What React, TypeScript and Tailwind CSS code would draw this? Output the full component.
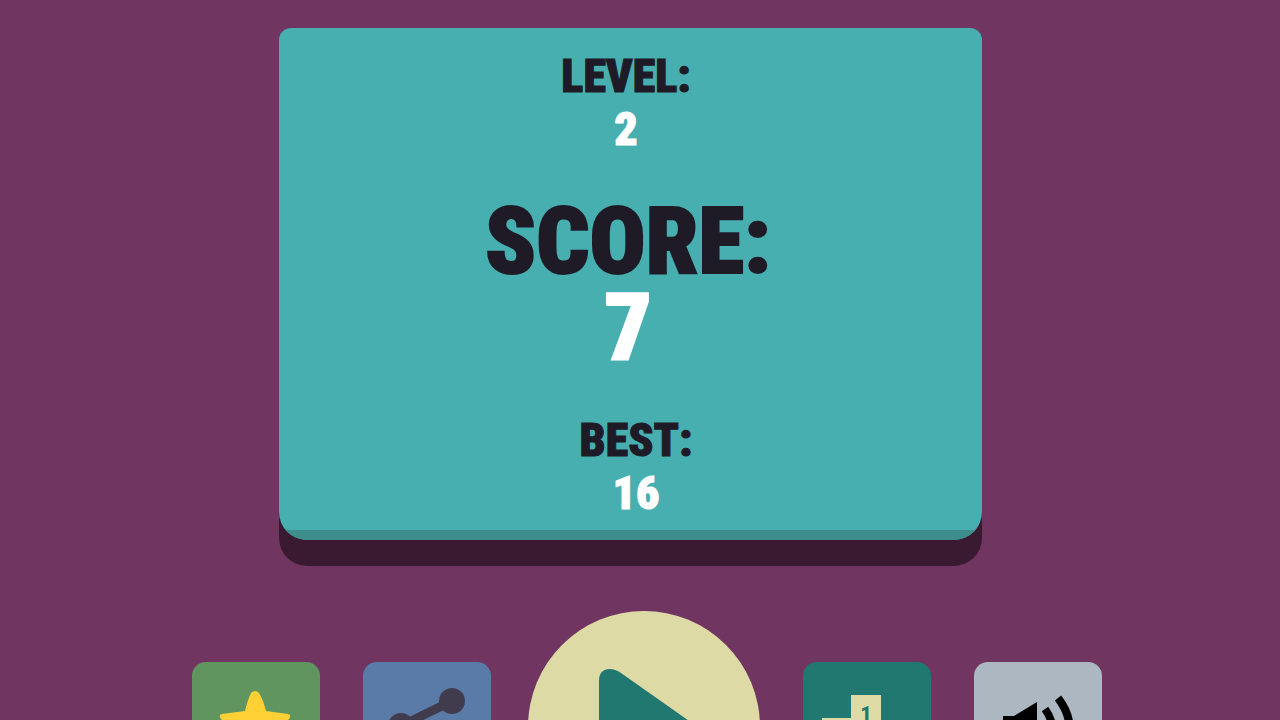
import type { ReactNode } from "react";

function Stat({ label, value, large = false, className = "" }: { label: string; value: number; large?: boolean; className?: string }) {
  const size = large
    ? "text-[93px] leading-[86px] [-webkit-text-stroke:2px_currentColor]"
    : "text-[46px] leading-[53px] [-webkit-text-stroke:1px_currentColor]";
  return (
    <dl className={`text-center ${size} ${className}`}>
      <dt className="text-[#1e1b27]">{label}</dt>
      <dd className="text-white">{value}</dd>
    </dl>
  );
}

function Tile({ label, className, children }: { label: string; className: string; children: ReactNode }) {
  return (
    <button type="button" aria-label={label} className={`mt-[51px] size-32 shrink-0 rounded-[14px] ${className}`}>
      <svg viewBox="0 0 128 128" className="size-full" aria-hidden="true">
        {children}
      </svg>
    </button>
  );
}

export default function App() {
  return (
    <main className="flex h-screen flex-col items-center overflow-hidden bg-[#703561] pt-7 font-['Roboto_Condensed','Roboto',sans-serif] font-black">
      <div className="flex w-full shrink-0 justify-center pr-5">
        <section className="w-full max-w-[703px] overflow-hidden rounded-t-xl rounded-b-[28px] bg-[#48afb1] shadow-[0_26px_0_#3a1a30]">
          <div className="flex flex-col items-center gap-[43px] pt-[22px] pb-[10px]">
            <Stat label="LEVEL:" value={2} className="pr-2" />
            <Stat label="SCORE:" value={7} large className="pr-1" />
            <Stat label="BEST:" value={16} className="pl-3" />
          </div>
          <div className="h-[10px] bg-[#3c8d8b]" />
        </section>
      </div>

      <nav className="mt-[71px] flex shrink-0 items-start justify-center gap-[43px] pl-[14px]">
        <Tile label="Rate" className="bg-[#61955f]">
          <path
            d="M59 31Q63 27 67 31Q71 37 74 49L96 52Q100 53 97 57L81 72L87 92Q88 99 81 96L63 84L45 96Q38 99 39 92L45 72L29 57Q26 53 30 52L53 49Q56 37 59 31Z"
            fill="#ffd033"
          />
        </Tile>
        <Tile label="Share" className="bg-[#5a7ba7]">
          <path d="M89 89L38 64L89 39" fill="none" stroke="#403c4e" strokeWidth="9" />
          <g fill="#403c4e">
            <circle cx="89" cy="39" r="13" />
            <circle cx="38" cy="64" r="13" />
            <circle cx="89" cy="89" r="13" />
          </g>
        </Tile>
        <button type="button" aria-label="Play" className="-ml-1.5 size-[232px] shrink-0 rounded-full bg-[#dddaa5]">
          <svg viewBox="0 0 232 232" className="size-full" aria-hidden="true">
            <path d="M71 70Q71 58 82 58Q87 58 93 62L164 112Q170 117 164 122L93 172Q87 176 82 176Q71 176 71 164Z" fill="#217870" />
          </svg>
        </button>
        <Tile label="Leaderboard" className="bg-[#217870]">
          <path d="M19 56H48V33H78V66H108V96H19Z" fill="#dddaa5" />
          <text x="63" y="61" textAnchor="middle" fontSize="23" className="font-['Roboto_Condensed','Roboto',sans-serif] font-bold" fill="#217870">
            1
          </text>
        </Tile>
        <Tile label="Sound" className="bg-[#adb7c2]">
          <path d="M29 54H40L63 40V92L40 78H29Z" fill="#000" />
          <path d="M71 47Q85 66 71 85M84 36Q107 66 84 96" fill="none" stroke="#000" strokeWidth="8" />
        </Tile>
      </nav>
    </main>
  );
}
